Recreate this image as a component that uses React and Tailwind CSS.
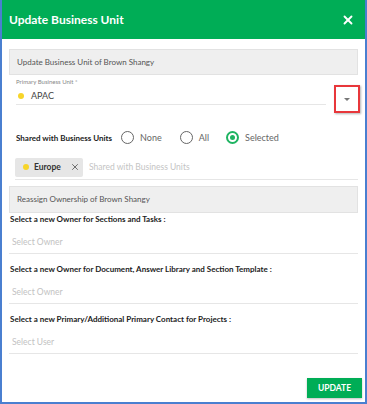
import { X } from 'lucide-react'

function Radio({ label, checked, className = '' }) {
    return (
        <label className={'flex items-center gap-[6px] ' + className}>
            <span
                className={
                    checked
                        ? 'w-[13px] h-[13px] rounded-full border-2 border-[#1fb462] flex items-center justify-center'
                        : 'w-[13px] h-[13px] rounded-full border-[1.5px] border-[#666]'
                }
            >
                {checked && <span className="w-[5px] h-[5px] rounded-full bg-[#1fb462]" />}
            </span>
            <span className="text-[9px] text-[#666]">{label}</span>
        </label>
    )
}

function OwnerField({ label, placeholder, first }) {
    return (
        <div className={first ? 'mt-[-1px]' : 'mt-[8px]'}>
            <div className="text-[8px] font-bold text-[#222] leading-[14px] pl-[1px]">{label}</div>
            <div className="h-[28px] flex items-end pb-[6px] pl-[3px] border-b border-[#e6e6e6] text-[8.5px] leading-[10px] text-[#c2c2c2]">
                {placeholder}
            </div>
        </div>
    )
}

export default function App() {
    return (
        <div
            className="w-[367px] h-[404px] bg-white border-2 border-t-0 border-[#4a7fd0] flex flex-col overflow-hidden"
            style={{ fontFamily: 'Lato, "Open Sans", sans-serif' }}
        >
            <div className="h-[39px] bg-[#00ad56] flex items-center justify-between pl-[7px] pr-[10px] shrink-0">
                <h2 className="text-white text-[12px] font-bold">Update Business Unit</h2>
                <X size={14} strokeWidth={3.2} className="text-white" />
            </div>

            <div className="px-[7px] pt-[10px] flex flex-col flex-1">
                <div className="h-[26px] bg-[#efefef] border border-[#e2e2e2] flex items-center pl-[7px] text-[8px] text-[#555]">
                    Update Business Unit of Brown Shangy
                </div>

                <div className="relative mx-[7px] mt-[2px]">
                    <div className="text-[6px] text-[#888] leading-[10px]">Primary Business Unit *</div>
                    <div className="h-[18px] flex items-center gap-[7px] border-b border-[#e6e6e6] mr-[25px] pl-[2px]">
                        <span className="w-[6px] h-[6px] rounded-full bg-[#f7d52a]" />
                        <span className="text-[9px] text-[#444]">APAC</span>
                    </div>
                    <div className="absolute right-[-9px] top-[8px] w-[26px] h-[28px] border-2 border-[#e8373b] shadow-[1px_1px_2px_rgba(0,0,0,0.3)] flex items-center justify-center">
                        <span className="w-0 h-0 border-l-[3px] border-r-[3px] border-t-[3px] border-l-transparent border-r-transparent border-t-[#777]" />
                    </div>
                </div>

                <div className="flex items-center mx-[7px] mt-[26px]">
                    <span className="text-[8px] font-bold text-[#222]">Shared with Business Units</span>
                    <Radio label="None" className="ml-[9px]" />
                    <Radio label="All" className="ml-[18px]" />
                    <Radio label="Selected" checked className="ml-[17px]" />
                </div>

                <div className="flex items-center gap-[6px] ml-[6px] mt-[13px] pb-[2px] border-b border-[#e6e6e6]">
                    <div className="h-[19px] w-[68px] bg-[#e6e6e6] rounded-[2px] flex items-center pl-[8px] gap-[5px]">
                        <span className="w-[6px] h-[6px] rounded-full bg-[#f7d52a]" />
                        <span className="text-[8.5px] font-bold text-[#333]">Europe</span>
                        <X size={10} strokeWidth={2} className="text-[#555] ml-[4px]" />
                    </div>
                    <span className="text-[8.5px] text-[#c4c4c4]">Shared with Business Units</span>
                </div>

                <div className="h-[27px] bg-[#efefef] border border-[#e2e2e2] flex items-center pl-[7px] text-[8px] text-[#555] mt-[6px]">
                    Reassign Ownership of Brown Shangy
                </div>

                <OwnerField first label="Select a new Owner for Sections and Tasks :" placeholder="Select Owner" />
                <OwnerField label="Select a new Owner for Document, Answer Library and Section Template :" placeholder="Select Owner" />
                <OwnerField label="Select a new Primary/Additional Primary Contact for Projects :" placeholder="Select User" />

                <div className="flex justify-end mt-auto mb-[4px] mr-[-4px]">
                    <button className="h-[20px] w-[55px] bg-[#00ad56] text-white text-[8.5px] font-bold shadow-[0_1px_2px_rgba(0,0,0,0.25)]">
                        UPDATE
                    </button>
                </div>
            </div>
        </div>
    )
}
